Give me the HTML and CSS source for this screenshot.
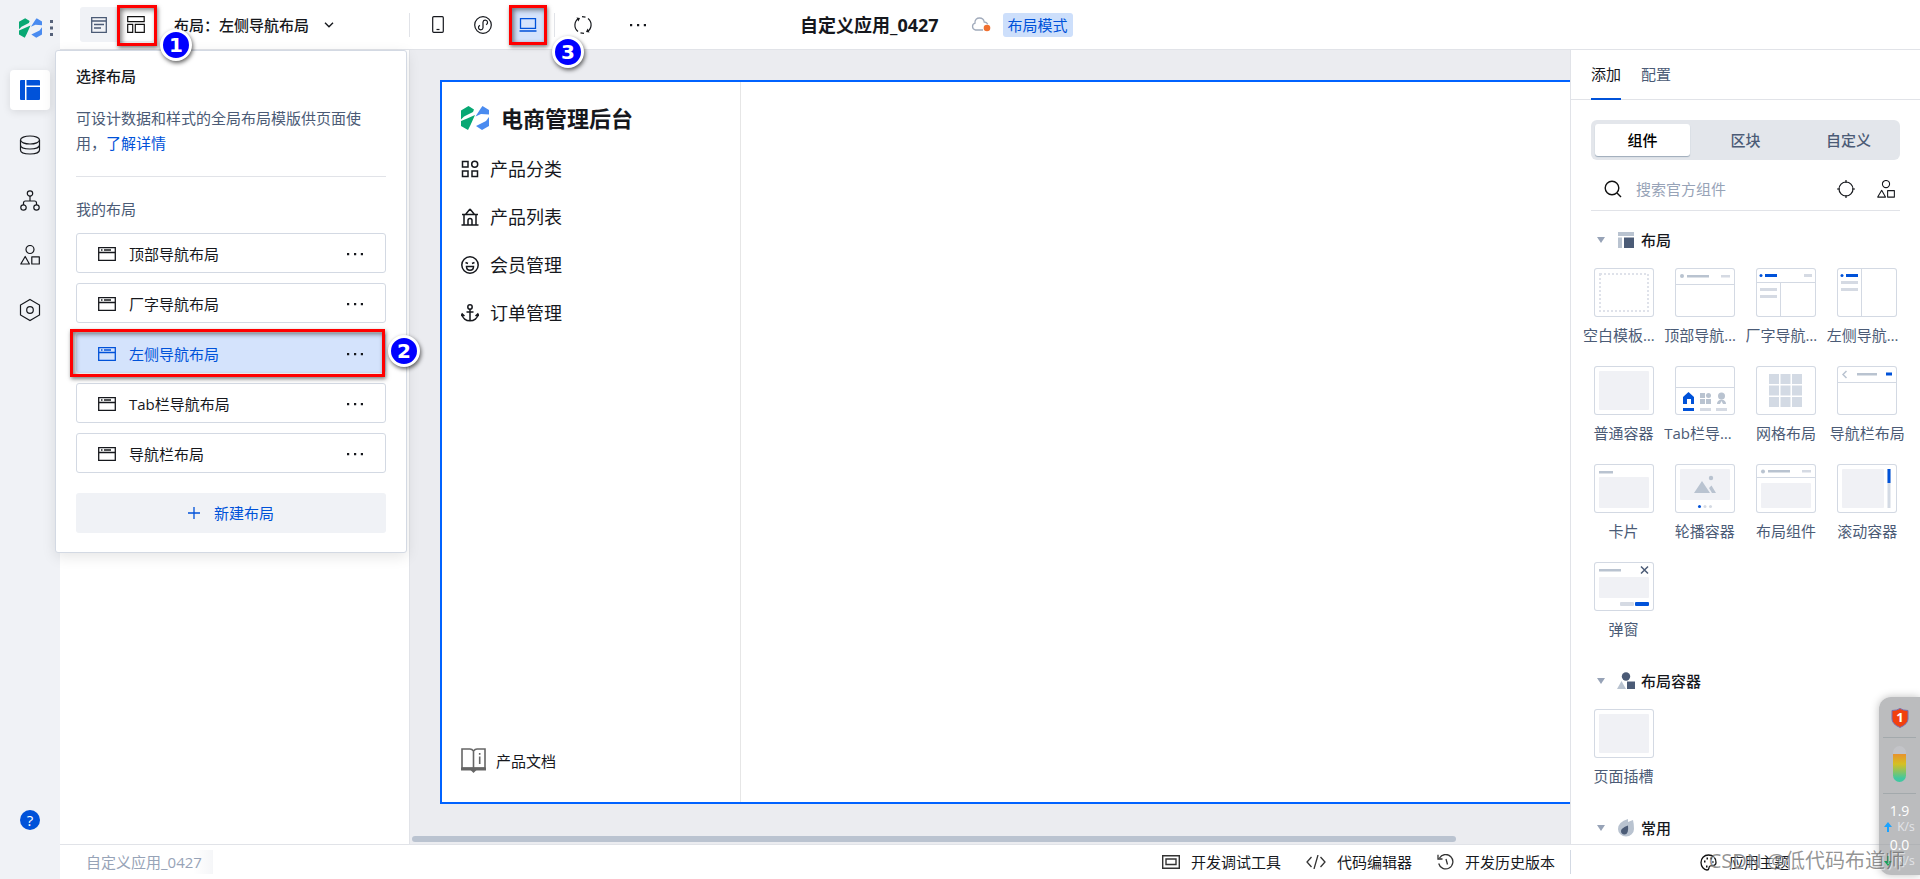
FILE: index.html
```html
<!DOCTYPE html>
<html lang="zh-CN">
<head>
<meta charset="utf-8">
<meta name="viewport" content="width=device-width, initial-scale=1">
<title>自定义应用_0427</title>
<link rel="stylesheet" href="styles.css">
</head>
<body>
<svg class="sprite" aria-hidden="true">
  <symbol id="i-logo" viewBox="0 0 28 24">
    <path fill="#07a873" d="M0 4.500 7.500 0 13 3.500 12 6 3 10.500 0 13.500zM0 15l5-2 9-4-4.500 10-2.500 5-7-4z"/>
    <path fill="#4a8bf0" d="M28 8.500l-8-.5-5.500 2.500L20 2l1.500-2L28 4zM28 11v9l-7 4-6-4 10-5z"/>
  </symbol>
  <symbol id="i-window" viewBox="0 0 18 14">
    <path fill="none" stroke="currentColor" stroke-width="1.3" d="M.7.7h16.600v12.600H.7zM.7 5.500h16.600M3 3h1.500M6 3h7"/>
  </symbol>
  <symbol id="i-shapes" viewBox="0 0 20 20">
    <path fill="none" stroke="currentColor" stroke-width="1.2" stroke-linejoin="round" d="M14 4.500a4 4 0 1 1-8 0 4 4 0 0 1 8 0zM.8 19l4.400-7.500L9.400 19zM11.800 11.800h7.500V19h-7.500z"/>
  </symbol>
  <symbol id="i-dots" viewBox="0 0 16 4">
    <path fill="currentColor" d="M0 1h2.200v2.200H0zM7 1h2.200v2.200H7zM13.800 1H16v2.200h-2.200z"/>
  </symbol>
</svg>

<div class="app">
  <nav class="rail" aria-label="主导航">
    <div class="rail-brand">
      <svg width="23" height="20"><use href="#i-logo"/></svg>
      <svg width="3" height="16" viewBox="0 0 3 16" fill="#56627a"><path d="M0 0h3v3H0zM0 6.500h3v3H0zM0 13h3v3H0z"/></svg>
    </div>
    <button class="rail-btn rail-btn-active" aria-label="页面"><svg width="20" height="20" viewBox="0 0 20 20" fill="#0052d9"><path d="M0 1q0-1 1-1h4v20H1q-1 0-1-1zM6.500 0H19q1 0 1 1v4.500H6.500zM6.500 7H20v12q0 1-1 1H6.500z"/></svg></button>
    <button class="rail-btn" aria-label="数据"><svg width="22" height="20" viewBox="0 0 22 20" fill="none" stroke="currentColor" stroke-width="1.200"><ellipse cx="11" cy="5" rx="9.500" ry="4"/><path d="M1.500 5v10c0 5.300 19 5.300 19 0V5M1.500 10c0 5.300 19 5.300 19 0"/></svg></button>
    <button class="rail-btn" aria-label="流程"><svg width="20" height="21" viewBox="0 0 20 21" fill="none" stroke="currentColor" stroke-width="1.200"><circle cx="10" cy="3.500" r="2.700"/><circle cx="3.500" cy="17.500" r="2.700"/><circle cx="16.500" cy="17.500" r="2.700"/><path d="M10 6v5M3.500 15v-2q0-2 2-2h9q2 0 2 2v2"/></svg></button>
    <button class="rail-btn" aria-label="素材"><svg width="20" height="20"><use href="#i-shapes"/></svg></button>
    <button class="rail-btn" aria-label="设置"><svg width="22" height="24" viewBox="0 0 22 24" fill="none" stroke="currentColor" stroke-width="1.200"><path d="M11 1.500 20.500 7v10L11 22.500 1.500 17V7z"/><circle cx="11" cy="12" r="3.300"/></svg></button>
    <button class="rail-help" aria-label="帮助">?</button>
  </nav>

  <div class="main">
    <header class="topbar">
      <div class="view-switch">
        <button aria-label="页面大纲"><svg width="16" height="16" viewBox="0 0 16 16" fill="none" stroke="#4b5b76" stroke-width="1.300"><path d="M.7.7h14.600v14.600H.7zM.7 4h14.600M3 7.500h10M3 11h7"/></svg></button>
        <button class="view-on marked" aria-label="布局"><svg width="18" height="17" viewBox="0 0 18 17" fill="none" stroke="#111" stroke-width="1.200"><path d="M.7.7h16.500v5H.7zM.7 8.300h5v8h-5zM8.300 8.300h9v8h-9z"/></svg><span class="frame"></span><span class="step">1</span></button>
      </div>
      <button class="layout-pick">布局：左侧导航布局<svg width="10" height="6" viewBox="0 0 10 6" fill="none" stroke="currentColor" stroke-width="1.400"><path d="m1 .8 4 4 4-4"/></svg></button>
      <span class="rule"></span>
      <div class="devices">
        <button class="tool" aria-label="手机"><svg width="12" height="17" viewBox="0 0 12 17" fill="none" stroke="currentColor" stroke-width="1.200"><rect x=".7" y=".7" width="10.600" height="15.600" rx="1"/><path d="M4.500 13.500h3"/></svg></button>
        <button class="tool" aria-label="小程序"><svg width="18" height="18" viewBox="0 0 18 18" fill="none" stroke="currentColor" stroke-width="1.200"><circle cx="9" cy="9" r="8.300"/><path d="M9 6v6a2.300 2.300 0 1 1-3-2.600M9 12V6a2.300 2.300 0 1 1 3 2.600"/></svg></button>
        <button class="tool tool-on marked" aria-label="电脑"><svg width="18" height="14" viewBox="0 0 18 14" fill="none" stroke="currentColor" stroke-width="1.300"><path d="M1.500.7h15v9.600h-15zM.5 13h17"/></svg><span class="frame"></span><span class="step">3</span></button>
      </div>
      <span class="rule"></span>
      <div class="devices devices-end">
        <button class="tool" aria-label="刷新"><svg width="18" height="18" viewBox="0 0 18 18" fill="none" stroke="currentColor" stroke-width="1.200"><path d="M4.500 2.500a8 8 0 0 0-.5 13M6.500 16.800l3.500.5M13.500 15.500a8 8 0 0 0 .5-13M11.500 1.200 8 .7"/><path fill="currentColor" stroke="none" d="m2.500 1.500 3.500.5L4.500 5.500zM15.500 16.500l-3.500-.5 1.500-3.500z"/></svg></button>
        <button class="tool" aria-label="更多"><svg width="16" height="4"><use href="#i-dots"/></svg></button>
      </div>
      <div class="doc">
        <h1 class="doc-title">自定义应用_0427</h1>
        <svg width="20" height="15" viewBox="0 0 20 15"><path fill="none" stroke="#a0aabb" stroke-width="1.300" d="M12 13H4.500a3.500 3.500 0 0 1-.5-6.800C3.500 2.500 6 1 8.500 1s4.300 1.500 4.700 4c1.800 0 3 1 3.600 2.200"/><circle cx="16" cy="11" r="3.300" fill="#f07030"/></svg>
        <span class="mode">布局模式</span>
      </div>
    </header>

    <div class="workspace">
      <section class="outline" aria-label="大纲"></section>
      <main class="canvas">
        <div class="artboard">
          <div class="site-side">
            <div class="site-brand"><svg width="28" height="24"><use href="#i-logo"/></svg>电商管理后台</div>
            <nav class="site-nav" aria-label="站点菜单">
              <a href="#"><svg width="18" height="18" viewBox="0 0 18 18" fill="none" stroke="currentColor" stroke-width="1.500"><path d="M1.500 1.500h5.500V7H1.500zM1.500 11H7v5.500H1.500zM11 11h5.500v5.500H11z"/><circle cx="13.700" cy="4.300" r="3"/></svg>产品分类</a>
              <a href="#"><svg width="18" height="18" viewBox="0 0 18 18" fill="none" stroke="currentColor" stroke-width="1.500"><path d="M9 1 4.500 6.500H1M9 1l4.500 5.500H17M4.500 6.500h9M3 6.500V17M15 6.500V17M.5 17h17M7 17v-4.500a2 2 0 0 1 4 0V17"/></svg>产品列表</a>
              <a href="#"><svg width="18" height="18" viewBox="0 0 18 18" fill="none" stroke="currentColor" stroke-width="1.500"><circle cx="9" cy="9" r="8.200"/><path d="m4.500 6.500 2.500 1M13.500 6.500l-2.500 1M5.500 10.500h7c0 5-7 5-7 0z"/></svg>会员管理</a>
              <a href="#"><svg width="18" height="18" viewBox="0 0 18 18" fill="none" stroke="currentColor" stroke-width="1.500"><circle cx="9" cy="3" r="2.200"/><path d="M9 5v12M5.500 8h7M1.200 10c0 9 15.600 9 15.600 0M0 12l1.200-2L3.500 12M18 12l-1.200-2-2.300 2"/></svg>订单管理</a>
            </nav>
            <a class="site-docs" href="#"><svg width="25" height="25" viewBox="0 0 25 25" fill="none" stroke="#666" stroke-width="1.600"><path d="M12.500 3Q11 1 9 1H1v19h23V1h-8q-2 0-3.500 2v17"/><path stroke-width="3" d="M0 21h25"/><path fill="#666" stroke="none" d="M9.500 22h6l-3 3z"/><path d="M18.700 5v1.800M18.700 8.500V16"/></svg>产品文档</a>
          </div>
          <div class="site-body"></div>
        </div>
        <div class="scroll"></div>
      </main>

      <aside class="library">
        <div class="tabs" role="tablist">
          <button class="tab tab-on" role="tab" aria-selected="true">添加</button>
          <button class="tab" role="tab" aria-selected="false">配置</button>
        </div>
        <div class="segment">
          <button class="seg-on">组件</button><button>区块</button><button>自定义</button>
        </div>
        <div class="search">
          <label for="q"><svg width="18" height="18" viewBox="0 0 18 18" fill="none" stroke="#111" stroke-width="1.400" aria-label="搜索"><circle cx="8" cy="8" r="6.800"/><path d="m13 13 4 4"/></svg></label>
          <input id="q" type="text" placeholder="搜索官方组件">
          <button aria-label="定位"><svg width="18" height="18" viewBox="0 0 18 18" fill="none" stroke="currentColor" stroke-width="1.200"><circle cx="9" cy="9" r="7"/><path d="M9 0v3M9 15v3M0 9h3M15 9h3"/></svg></button>
          <button aria-label="分类"><svg width="18" height="18"><use href="#i-shapes"/></svg></button>
        </div>

        <section class="group">
          <h2 class="group-title"><span class="caret"></span><svg width="18" height="16" viewBox="0 0 18 16"><path fill="#b9c3d0" d="M1 0h16v4H1zM1 5.500h4V16H1z"/><path fill="#4b5b76" d="M7 5.500h10V16H7z"/></svg>布局</h2>
          <ul class="tiles">
            <li><svg class="thumb" viewBox="0 0 60 49"><rect class="dash" x="6" y="6" width="48" height="37"/></svg><span>空白模板容器</span></li>
            <li><svg class="thumb" viewBox="0 0 60 49"><path class="line" d="M0 16.500h60"/><circle class="mid" cx="7" cy="8" r="2"/><path class="mid" d="M12 7h22v2.500H12z"/><path class="soft" d="M46 7h9v2.500h-9z"/></svg><span>顶部导航布局</span></li>
            <li><svg class="thumb" viewBox="0 0 60 49"><path class="line" d="M0 14.500h60M24.500 14.500V49"/><circle class="blue" cx="5" cy="7.500" r="1.500"/><path class="blue" d="M9 6h12v3H9z"/><path class="soft" d="M48 6h8v3h-8zM4 20h17v3H4zM4 27h17v3H4z"/></svg><span>厂字导航布局</span></li>
            <li><svg class="thumb" viewBox="0 0 60 49"><path class="line" d="M24.500 0v49"/><circle class="blue" cx="5" cy="7.500" r="1.500"/><path class="blue" d="M9 6h12v3H9z"/><path class="soft" d="M4 13h17v3H4zM4 20h17v3H4z"/></svg><span>左侧导航布局</span></li>
            <li><svg class="thumb" viewBox="0 0 60 49"><rect class="fill" x="5" y="5" width="50" height="39" rx="1"/></svg><span>普通容器</span></li>
            <li><svg class="thumb" viewBox="0 0 60 49"><path class="line" d="M0 21.500h60"/><path class="blue" d="M8 38V31l5.500-5 5.500 5v7h-3v-5h-4v5zM8 42h11v3H8z"/><path class="soft" d="M25 42h11v3H25zM41 42h11v3H41z"/><path class="mid" d="M25 27h5v5h-5zM25 33h5v5h-5zM31 33h5v5h-5zM42 38q0-4 4.500-4.500Q51 34 51 38h-3l-1.500-3-1.500 3z"/><circle class="mid" cx="33.500" cy="29.500" r="2.500"/><circle class="mid" cx="46.500" cy="30" r="3.500"/></svg><span>Tab栏导航布局</span></li>
            <li><svg class="thumb" viewBox="0 0 60 49"><path class="cell" d="M13 8h10v10H13zM24.500 8h10v10h-10zM36 8h10v10H36zM13 19.500h10v10H13zM24.500 19.500h10v10h-10zM36 19.500h10v10H36zM13 31h10v10H13zM24.500 31h10v10h-10zM36 31h10v10H36z"/></svg><span>网格布局</span></li>
            <li><svg class="thumb" viewBox="0 0 60 49"><path class="line" d="M0 16.500h60"/><path fill="none" stroke="#b9c3d0" stroke-width="1.500" d="M9.500 5 6 8.500 9.500 12"/><path class="mid" d="M20 7h20v2.500H20z"/><path class="blue" d="M49 6.500h6v3h-6z"/></svg><span>导航栏布局</span></li>
            <li><svg class="thumb" viewBox="0 0 60 49"><path class="mid" d="M5 7h14v2.500H5z"/><rect class="fill" x="5" y="13" width="50" height="31" rx="1"/></svg><span>卡片</span></li>
            <li><svg class="thumb" viewBox="0 0 60 49"><rect class="fill" x="5" y="5" width="50" height="31" rx="1"/><path class="mid" d="m19 29 8-12 8 12zM34 24l2.500-2.500L41 29h-4z"/><circle class="mid" cx="36" cy="14" r="2.200"/><circle class="blue" cx="24.500" cy="42.500" r="1.500"/><circle class="soft" cx="30" cy="42.500" r="1.500"/><circle class="soft" cx="35.500" cy="42.500" r="1.500"/></svg><span>轮播容器</span></li>
            <li><svg class="thumb" viewBox="0 0 60 49"><path class="line" d="M0 13.500h60"/><circle class="mid" cx="7" cy="7.500" r="2"/><path class="mid" d="M12 6h22v2.500H12z"/><path class="soft" d="M46 6h9v2.500h-9z"/><rect class="fill" x="5" y="19" width="50" height="25" rx="1"/></svg><span>布局组件</span></li>
            <li><svg class="thumb" viewBox="0 0 60 49"><rect class="fill" x="5" y="5" width="42" height="39" rx="1"/><path class="cell" d="M50.500 5h3v39h-3z"/><path class="blue" d="M50.500 5h3v14h-3z"/></svg><span>滚动容器</span></li>
            <li><svg class="thumb" viewBox="0 0 60 49"><path class="mid" d="M5 7h22v2.500H5z"/><path fill="none" stroke="#4b5b76" stroke-width="1.500" d="m47 4.500 7 7M54 4.500l-7 7"/><rect class="fill" x="5" y="15" width="50" height="21" rx="1"/><rect class="soft" x="26" y="40" width="14" height="4" rx="1"/><rect class="blue" x="41" y="40" width="14" height="4" rx="1"/></svg><span>弹窗</span></li>
          </ul>
        </section>
        <section class="group">
          <h2 class="group-title"><span class="caret"></span><svg width="18" height="18" viewBox="0 0 18 18"><circle cx="9" cy="4.500" r="4.200" fill="#4b5b76"/><path fill="#b9c3d0" d="m0 17 4.500-8L9 17z"/><path fill="#4b5b76" d="M10 9.500h8V17h-8z"/></svg>布局容器</h2>
          <ul class="tiles">
            <li><svg class="thumb" viewBox="0 0 60 49"><rect class="fill" x="5" y="5" width="50" height="39" rx="1"/></svg><span>页面插槽</span></li>
          </ul>
        </section>
        <section class="group">
          <h2 class="group-title"><span class="caret"></span><svg width="18" height="18" viewBox="0 0 18 18"><path fill="#b9c3d0" d="M11 0v3l5-2q1 4 1 9a8 7.500 0 0 1-16 0Q1 3 11 0z"/><path fill="#4b5b76" d="M11 6.500q1 9-3.500 9A3.300 3.300 0 0 1 4 12q0-3 7-5.500z"/></svg>常用</h2>
        </section>
      </aside>
    </div>

    <footer class="status">
      <span class="crumb">自定义应用_0427</span>
      <div class="dev-tools">
        <button><svg width="18" height="14" viewBox="0 0 18 14" fill="none" stroke="#333" stroke-width="1.400"><path d="M.7.7h16.600v12.600H.7zM4 4h10v5.500H4z"/></svg>开发调试工具</button>
        <button><svg width="20" height="14" viewBox="0 0 20 14" fill="none" stroke="#333" stroke-width="1.300"><path d="M5.500 2 1 7l4.500 5M14.500 2 19 7l-4.500 5M12 0 8 14"/></svg>代码编辑器</button>
        <button><svg width="17" height="16" viewBox="0 0 17 16" fill="none" stroke="#333" stroke-width="1.300"><path d="M2.500 4a7.200 7.200 0 1 1-.8 5.500M1 .8V5h4.500M9 5l1.500 5.500"/></svg>开发历史版本</button>
      </div>
      <div class="theme"><button><svg width="17" height="17" viewBox="0 0 17 17" fill="none" stroke="#111" stroke-width="1.300"><path d="M8.500 1C4 1 1 4.500 1 8.500S4 16 7 16c3 0 1-3 3-4s6 1 6-3.500C16 4 13 1 8.500 1z"/><path stroke-width="2" d="M4 7.500h1.500M6.500 4.500H8M10.500 4.500H12M12 8h1.500M6 12.500h1.500"/></svg>应用主题</button></div>
    </footer>
  </div>
</div>

<section class="popover" aria-label="选择布局">
  <h2 class="pop-title">选择布局</h2>
  <p class="pop-text">可设计数据和样式的全局布局模版供页面使用，<a href="#">了解详情</a></p>
  <h3 class="pop-sub">我的布局</h3>
  <ul class="layouts">
    <li><button class="layout"><svg width="18" height="14"><use href="#i-window"/></svg><span>顶部导航布局</span><svg class="more" width="16" height="4"><use href="#i-dots"/></svg></button></li>
    <li><button class="layout"><svg width="18" height="14"><use href="#i-window"/></svg><span>厂字导航布局</span><svg class="more" width="16" height="4"><use href="#i-dots"/></svg></button></li>
    <li><button class="layout layout-on marked"><svg width="18" height="14"><use href="#i-window"/></svg><span>左侧导航布局</span><svg class="more" width="16" height="4"><use href="#i-dots"/></svg><i class="frame"></i><b class="step">2</b></button></li>
    <li><button class="layout"><svg width="18" height="14"><use href="#i-window"/></svg><span>Tab栏导航布局</span><svg class="more" width="16" height="4"><use href="#i-dots"/></svg></button></li>
    <li><button class="layout"><svg width="18" height="14"><use href="#i-window"/></svg><span>导航栏布局</span><svg class="more" width="16" height="4"><use href="#i-dots"/></svg></button></li>
  </ul>
  <button class="new-layout"><svg width="12" height="12" viewBox="0 0 12 12" stroke="currentColor" stroke-width="1.300"><path d="M6 0v12M0 6h12"/></svg>新建布局</button>
</section>

<div class="monitor">
  <svg width="18" height="20" viewBox="0 0 18 20"><path fill="#f2400f" stroke="#7a6fb0" d="M1 2.500q5 0 8-2 3 2 8 2V11q0 5-8 8.500Q1 16 1 11z"/><text x="9" y="14" text-anchor="middle">1</text></svg>
  <span class="mon-rule"></span>
  <span class="gauge"></span>
  <span class="mon-rule"></span>
  <div class="rate">1.9<small><svg width="8" height="10" viewBox="0 0 8 10"><path fill="#1aa3ff" d="m4 0 4 5H5v5H3V5H0z"/></svg>K/s</small></div>
  <div class="rate">0.0<small><svg width="8" height="10" viewBox="0 0 8 10"><path fill="#12a558" d="m4 10 4-5H5V0H3v5H0z"/></svg>K/s</small></div>
</div>
<div class="watermark">CSDN @低代码布道师</div>
</body>
</html>
```

FILE: styles.css
```css
* { box-sizing: border-box; }

body {
  margin: 0;
  font: 15px/24px "Open Sans", "Noto Sans CJK SC", sans-serif;
  font-weight: 400;
  color: #16181d;
  background: #fff;
  overflow: hidden;
}

button {
  display: flex;
  align-items: center;
  justify-content: center;
  margin: 0;
  padding: 0;
  border: 0;
  background: none;
  font: inherit;
  color: inherit;
}

a { color: inherit; text-decoration: none; }
ul { list-style: none; margin: 0; padding: 0; }
h1, h2, h3, p { margin: 0; font-size: 15px; }
svg { flex: none; display: block; }
.sprite { position: absolute; width: 0; height: 0; }

.app { display: flex; height: 100vh; }

/* left icon rail */
.rail {
  flex: none;
  width: 60px;
  display: flex;
  flex-direction: column;
  align-items: center;
  gap: 15px;
  background: #f0f2f6;
}
.rail-brand {
  display: flex;
  align-items: center;
  gap: 8px;
  height: 55px;
  padding-left: 11px;
}
.rail-btn { width: 40px; height: 40px; border-radius: 4px; }
.rail-btn-active { background: #fff; box-shadow: 0 2px 8px #0000001a; }
.rail-help {
  width: 20px;
  height: 20px;
  margin-top: auto;
  margin-bottom: 49px;
  border-radius: 50%;
  background: #0052d9;
  color: #fff;
}

.main { flex: 1; min-width: 0; display: flex; flex-direction: column; }

/* top bar */
.topbar {
  flex: none;
  display: flex;
  align-items: center;
  height: 50px;
  padding-left: 20px;
  border-bottom: 1px solid #e1e3e8;
}
.view-switch { display: flex; padding: 1px 0; background: #f0f2f6; border-radius: 3px; }
.view-switch button { width: 37px; height: 33px; border-radius: 3px; }
.view-switch .view-on { background: #fff; }
.layout-pick { margin-left: 20px; gap: 15px; font-weight: 500; }
.rule { width: 1px; height: 24px; background: #e1e3e8; }
.layout-pick + .rule { margin-left: 75px; }
.devices { display: flex; gap: 8px; padding: 0 8px 0 9px; }
.devices-end { gap: 18px; }
.tool { width: 37px; height: 34px; }
.tool-on { background: #d4e3fc; color: #0052d9; }
.doc { display: flex; align-items: center; gap: 12px; margin-left: 136px; }
.doc-title { margin-right: 20px; font-size: 18px; font-weight: 700; }
.mode {
  padding: 0 5px;
  border-radius: 3px;
  background: #cddffb;
  color: #0052d9;
}

.workspace { flex: 1; min-height: 0; display: flex; }
.outline { flex: none; width: 350px; border-right: 1px solid #e1e3e8; }

/* canvas */
.canvas {
  flex: 1;
  min-width: 0;
  display: flex;
  flex-direction: column;
  padding: 30px 0 2px;
  background: #ebecf0;
}
.artboard {
  flex: 1;
  display: flex;
  margin-left: 30px;
  border: 2px solid #0062ff;
  border-right: 0;
  background: #fff;
}
.site-side {
  flex: none;
  width: 299px;
  display: flex;
  flex-direction: column;
  padding: 16px 18px 29px 19px;
  border-right: 1px solid #e6e6e6;
}
.site-brand {
  display: flex;
  align-items: center;
  gap: 12px;
  height: 40px;
  font-size: 22px;
  font-weight: 700;
}
.site-nav { display: flex; flex-direction: column; gap: 24px; margin-top: 19px; font-size: 18px; }
.site-nav a { display: flex; align-items: center; gap: 11px; }
.site-docs { display: flex; align-items: center; gap: 10px; margin-top: auto; }
.scroll {
  width: 90%;
  height: 6px;
  margin: 32px 0 0 2px;
  border-radius: 3px;
  background: #bac3d0;
}

/* component library */
.library {
  flex: none;
  width: 350px;
  border-left: 1px solid #e1e3e8;
  overflow: hidden;
}
.tabs { display: flex; gap: 20px; height: 50px; padding: 0 20px; border-bottom: 1px solid #e1e3e8; }
.tab { height: 50px; color: #4b5b76; border-bottom: 2px solid transparent; }
.tab-on { color: #16181d; border-color: #0052d9; }
.segment {
  display: grid;
  grid-template-columns: repeat(3, 1fr);
  gap: 8px;
  margin: 20px 20px 0;
  padding: 4px;
  border-radius: 6px;
  background: #e3e6eb;
  color: #4b5b76;
  font-weight: 500;
}
.segment button { height: 32px; border-radius: 3px; }
.segment .seg-on { background: #fff; color: #000; box-shadow: 0 1px 1px #9daaba; }
.search {
  display: flex;
  align-items: center;
  gap: 22px;
  height: 51px;
  margin: 0 20px;
  padding: 8px 5px 0 13px;
  border-bottom: 1px solid #e1e3e8;
}
.search input {
  flex: 1;
  min-width: 0;
  margin-left: -8px;
  padding: 0;
  border: 0;
  outline: 0;
  background: none;
  font: inherit;
}
.search input::placeholder { color: #97a3b7; opacity: 1; }
.group { margin-top: 19px; }
.search + .group { margin-top: 8px; }
.group-title {
  display: flex;
  align-items: center;
  gap: 6px;
  height: 42px;
  margin-bottom: 7px;
  padding-left: 26px;
  font-weight: 500;
}
.caret {
  margin-right: 6px;
  border: 4px solid transparent;
  border-top: 6px solid #97a3b7;
  border-bottom: 0;
}
.tiles { display: grid; grid-template-columns: repeat(4, 1fr); row-gap: 19px; padding: 0 12px; color: #4b5b76; }
.tiles li { min-width: 0; display: flex; flex-direction: column; align-items: center; gap: 6px; }
.tiles span {
  width: 100%;
  overflow: hidden;
  white-space: nowrap;
  text-overflow: ellipsis;
  text-align: center;
}
.thumb {
  width: 60px;
  height: 49px;
  border-radius: 3px;
  box-shadow: inset 0 0 0 1px #d3d9e3;
}
.dash { fill: none; stroke: #dfe2ea; stroke-width: 2; stroke-dasharray: 2 2; }
.line { fill: none; stroke: #d3d9e3; }
.mid { fill: #b9c3d0; }
.soft { fill: #d5dae3; }
.cell { fill: #d3dae4; }
.fill { fill: #f0f1f5; }
.blue { fill: #0052d9; }

/* status bar */
.status {
  flex: none;
  display: flex;
  align-items: center;
  height: 35px;
  border-top: 1px solid #e1e3e8;
}
.crumb {
  margin-left: 20px;
  padding: 0 11px 0 6px;
  color: #97a3b7;
  background: linear-gradient(to right, #fff 85%, #f5f6f8);
}
.dev-tools { display: flex; gap: 25px; margin-left: auto; padding-right: 15px; border-right: 1px solid #d3d9e3; }
.dev-tools button { gap: 11px; }
.theme { width: 349px; padding-left: 129px; }
.theme button { gap: 12px; }

/* layout picker */
.popover {
  position: absolute;
  left: 55px;
  top: 50px;
  width: 352px;
  padding: 13px 20px 19px;
  border: 1px solid #d3d9e3;
  border-radius: 3px;
  background: #fff;
  box-shadow: 0 4px 14px #0000001a;
}
.pop-title { font-weight: 500; }
.pop-text {
  margin-top: 18px;
  padding-bottom: 20px;
  line-height: 25px;
  color: #4b5b76;
  border-bottom: 1px solid #e1e3e8;
}
.pop-text a { color: #0052d9; }
.pop-sub { margin: 20px 0 12px; font-weight: 400; color: #4b5b76; }
.layouts { display: grid; gap: 10px; }
.layout {
  width: 100%;
  height: 40px;
  gap: 13px;
  padding: 1px 22px 0 21px;
  border: 1px solid #d3d9e3;
  border-radius: 3px;
}
.layout .more { margin-left: auto; color: #16181d; }
.layout-on { background: #d4e3fc; border-color: #d4e3fc; color: #0052d9; }
.new-layout {
  width: 100%;
  height: 40px;
  margin-top: 20px;
  gap: 14px;
  border-radius: 3px;
  background: #f0f2f6;
  color: #0052d9;
}

/* numbered call-outs */
.marked { position: relative; }
.frame {
  position: absolute;
  inset: -3px -3px -5px 0;
  border: 3px solid #f00;
  box-shadow: 1px 2px 4px #00000080, inset 2px 2px 5px #00000080;
}
.layout .frame { inset: -5px 0 -5px -7px; }
.tool .frame { inset: -3px -1px -3px 0; }
.step {
  position: absolute;
  left: 43px;
  top: 21px;
  z-index: 2;
  width: 32px;
  height: 32px;
  border: 3px solid #fff;
  border-radius: 50%;
  background: #00f;
  box-shadow: 1px 2px 4px #000000a0;
  color: #fff;
  font: 700 20px/26px "DejaVu Sans", sans-serif;
  text-align: center;
}
.tool .step { top: 28px; left: 43px; }
.layout .step { top: 1px; left: 311px; }

/* floating system monitor */
.monitor {
  position: absolute;
  right: 0;
  bottom: 4px;
  width: 41px;
  height: 178px;
  display: flex;
  flex-direction: column;
  align-items: center;
  padding-top: 11px;
  border-radius: 12px 0 0 12px;
  background: #98999ca8;
  box-shadow: 0 0 8px #00000040;
  color: #fff;
}
.monitor text { font: 700 13px "Open Sans", sans-serif; fill: #fff; }
.mon-rule { width: 33px; height: 1px; margin: 9px 0 8px; background: #a3a9ac; }
.gauge {
  width: 13px;
  height: 36px;
  margin-bottom: 2px;
  border-radius: 7px;
  background: linear-gradient(#c3c4c8 0 22%, #e8922c 22%, #d6c021 50%, #40c8a0 90%);
}
.rate { margin-bottom: 3px; font-size: 14px; line-height: 18px; text-align: center; }
.rate small { display: flex; align-items: center; gap: 5px; font-size: 12px; line-height: 13px; color: #e3e4e8; }
.watermark {
  position: absolute;
  right: 15px;
  bottom: 6px;
  font-size: 20px;
  color: #555555a0;
  text-shadow: 1px 1px 1px #ffffffa0;
}
```
